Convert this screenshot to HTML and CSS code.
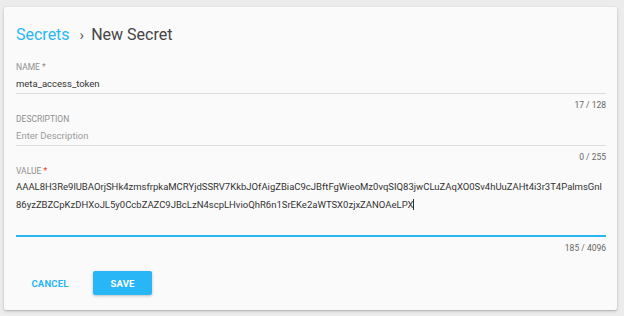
FILE: index.html
```html
<!DOCTYPE html>
<html>
<head>
<meta charset="utf-8">
<link rel="stylesheet" href="styles.css">
</head>
<body>
<div class="card">
  <div class="crumbs">
    <span class="crumb-link">Secrets</span>
    <span class="crumb-sep">›</span>
    <span class="crumb-current">New Secret</span>
  </div>

  <div class="field">
    <div class="label">NAME <span class="req">*</span></div>
    <div class="input">meta_access_token</div>
    <div class="counter">17 / 128</div>
  </div>

  <div class="field">
    <div class="label">DESCRIPTION</div>
    <div class="input placeholder">Enter Description</div>
    <div class="counter">0 / 255</div>
  </div>

  <div class="field field-value">
    <div class="label">VALUE <span class="req red">*</span></div>
    <div class="input area focused"><div class="line">AAAL8H3Re9lUBAOrjSHk4zmsfrpkaMCRYjdSSRV7KkbJOfAigZBiaC9cJBftFgWieoMz0vqSIQ83jwCLuZAqXO0Sv4hUuZAHt4i3r3T4PalmsGnl</div><div class="line">86yzZBZCpKzDHXoJL5y0CcbZAZC9JBcLzN4scpLHvioQhR6n1SrEKe2aWTSX0zjxZANOAeLPX<span class="caret"></span></div></div>
    <div class="counter">185 / 4096</div>
  </div>

  <div class="actions">
    <button class="btn btn-flat">CANCEL</button>
    <button class="btn btn-raised">SAVE</button>
  </div>
</div>
</body>
</html>
```

FILE: styles.css
```css
html, body {
  margin: 0;
  padding: 0;
  background: #ececec;
  font-family: Roboto, "Liberation Sans", sans-serif;
}

.card {
  margin: 7px 7px 6px 4px;
  width: 613px;
  height: 303px;
  box-sizing: border-box;
  background: #fafafa;
  border-radius: 2px;
  box-shadow: 0 1px 3px rgba(0,0,0,0.22), 0 1px 1px rgba(0,0,0,0.08);
  padding: 16px 11px 0 12px;
}

.crumbs {
  display: flex;
  align-items: center;
  height: 24px;
  line-height: 24px;
  font-size: 16px;
}

.crumb-link {
  color: #29b6f6;
}

.crumb-sep {
  color: #555;
  font-size: 15px;
  margin: 0 7px 0 10px;
}

.crumb-current {
  color: #444;
}

.crumbs + .field {
  margin-top: 14px;
}

.field + .field {
  margin-top: 2px;
}

.label {
  height: 12px;
  line-height: 12px;
  font-size: 8.5px;
  color: #8f8f8f;
  margin-bottom: 2px;
}

.field-value .label {
  margin-bottom: 1px;
}

.req.red {
  color: #e53935;
}

.input {
  height: 18px;
  line-height: 18px;
  font-size: 9.5px;
  color: #333;
  border-bottom: 1px solid #dedede;
}

.input.placeholder {
  color: #9a9a9a;
}

.input.area {
  height: 59px;
  box-sizing: border-box;
  border-bottom: 2px solid #29b6f6;
  white-space: nowrap;
}

.caret {
  display: inline-block;
  width: 1px;
  height: 11px;
  background: #333;
  vertical-align: -2px;
}

.counter {
  margin-top: 5px;
  height: 12px;
  line-height: 12px;
  text-align: right;
  font-size: 8.5px;
  color: #666;
}

.actions {
  display: flex;
  align-items: center;
  gap: 9px;
  margin-top: 17px;
}

.btn {
  height: 24px;
  border: none;
  border-radius: 2px;
  font-family: Roboto, "Liberation Sans", sans-serif;
  font-size: 9.5px;
  font-weight: 700;
  letter-spacing: 0.2px;
  padding: 0;
  cursor: pointer;
}

.btn-flat {
  width: 68px;
  background: transparent;
  color: #29b6f6;
}

.btn-raised {
  width: 59px;
  background: #29b6f6;
  color: #fff;
  box-shadow: 0 1px 3px rgba(0,0,0,0.25);
}
```
